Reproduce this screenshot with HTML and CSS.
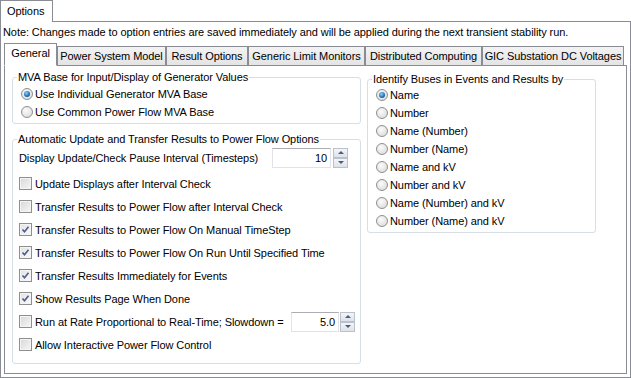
FILE: index.html
```html
<!DOCTYPE html>
<html lang="en">
<head>
    <meta charset="UTF-8">
    <meta name="viewport" content="width=device-width, initial-scale=1.0">
    <title>Options</title>
    <link rel="stylesheet" href="styles.css">
</head>
<body>
<div class="window">
    <!-- outer tab -->
    <div class="tab-strip outer-strip">
        <div class="tab active">Options</div>
        <div class="tab-fill"></div>
    </div>
    <div class="page outer-page">
        <p class="note">Note: Changes made to option entries are saved immediately and will be applied during the next transient stability run.</p>

        <!-- inner tabs -->
        <div class="tab-strip inner-strip">
            <div class="tab active t-general">General</div>
            <div class="tab t-power">Power System Model</div>
            <div class="tab t-result">Result Options</div>
            <div class="tab t-limit">Generic Limit Monitors</div>
            <div class="tab t-dist">Distributed Computing</div>
            <div class="tab t-gic">GIC Substation DC Voltages</div>
            <div class="tab-fill"></div>
        </div>
        <div class="page inner-page">
            <div class="col-left">
                <fieldset class="group group-mva">
                    <legend>MVA Base for Input/Display of Generator Values</legend>
                    <div class="opt"><span class="radio on"></span>Use Individual Generator MVA Base</div>
                    <div class="opt"><span class="radio"></span>Use Common Power Flow MVA Base</div>
                </fieldset>

                <fieldset class="group group-auto">
                    <legend>Automatic Update and Transfer Results to Power Flow Options</legend>
                    <div class="row spin-row">
                        <span class="label">Display Update/Check Pause Interval (Timesteps)</span>
                        <div class="spin spin-interval">
                            <div class="spin-box">10</div>
                            <div class="spin-btns">
                                <span class="spin-btn up"></span>
                                <span class="spin-btn down"></span>
                            </div>
                        </div>
                    </div>
                    <div class="row"><span class="check"></span>Update Displays after Interval Check</div>
                    <div class="row"><span class="check"></span>Transfer Results to Power Flow after Interval Check</div>
                    <div class="row"><span class="check on"><svg width="11" height="11" viewBox="0 0 11 11"><path d="M2.5 5.5 L4.5 7.8 L8.5 2.8" fill="none" stroke="#4b5d8c" stroke-width="1.6"/></svg></span>Transfer Results to Power Flow On Manual TimeStep</div>
                    <div class="row"><span class="check on"><svg width="11" height="11" viewBox="0 0 11 11"><path d="M2.5 5.5 L4.5 7.8 L8.5 2.8" fill="none" stroke="#4b5d8c" stroke-width="1.6"/></svg></span>Transfer Results to Power Flow On Run Until Specified Time</div>
                    <div class="row"><span class="check on"><svg width="11" height="11" viewBox="0 0 11 11"><path d="M2.5 5.5 L4.5 7.8 L8.5 2.8" fill="none" stroke="#4b5d8c" stroke-width="1.6"/></svg></span>Transfer Results Immediately for Events</div>
                    <div class="row"><span class="check on"><svg width="11" height="11" viewBox="0 0 11 11"><path d="M2.5 5.5 L4.5 7.8 L8.5 2.8" fill="none" stroke="#4b5d8c" stroke-width="1.6"/></svg></span>Show Results Page When Done</div>
                    <div class="row">
                        <span class="check"></span>Run at Rate Proportional to Real-Time; Slowdown =
                        <div class="spin spin-slow">
                            <div class="spin-box">5.0</div>
                            <div class="spin-btns">
                                <span class="spin-btn up"></span>
                                <span class="spin-btn down"></span>
                            </div>
                        </div>
                    </div>
                    <div class="row"><span class="check"></span>Allow Interactive Power Flow Control</div>
                </fieldset>
            </div>

            <div class="col-right">
                <fieldset class="group group-bus">
                    <legend>Identify Buses in Events and Results by</legend>
                    <div class="opt"><span class="radio on"></span>Name</div>
                    <div class="opt"><span class="radio"></span>Number</div>
                    <div class="opt"><span class="radio"></span>Name (Number)</div>
                    <div class="opt"><span class="radio"></span>Number (Name)</div>
                    <div class="opt"><span class="radio"></span>Name and kV</div>
                    <div class="opt"><span class="radio"></span>Number and kV</div>
                    <div class="opt"><span class="radio"></span>Name (Number) and kV</div>
                    <div class="opt"><span class="radio"></span>Number (Name) and kV</div>
                </fieldset>
            </div>
        </div>
    </div>
</div>
</body>
</html>
```

FILE: styles.css
```css
* {
    box-sizing: border-box;
}

body {
    margin: 0;
    font-family: "Liberation Sans", Arial, sans-serif;
    font-size: 11px;
    letter-spacing: -0.08px;
    color: #000;
    background: #fff;
}

.window {
    width: 631px;
    height: 378px;
}

/* tabs */
.tab-strip {
    display: flex;
    align-items: flex-end;
}

.tab {
    border: 1px solid #898c95;
    line-height: 15px;
    white-space: nowrap;
    text-align: center;
    padding-top: 2px;
    background: linear-gradient(#f3f3f3, #e4e4e4);
}

.tab.active {
    background: #fff;
    border-bottom-color: #fff;
}

.tab-fill {
    flex: 1;
    border-bottom: 1px solid #898c95;
}

.outer-strip {
    height: 22px;
}

.outer-strip .tab {
    width: 53px;
    height: 22px;
    border-bottom: none;
    padding: 3px 0 0 6px;
    text-align: left;
}

.inner-strip {
    height: 23px;
    margin-top: 3px;
}

.inner-strip .tab {
    height: 20px;
}

.inner-strip .tab.active {
    height: 23px;
}

.t-general { width: 53px; }
.t-power { width: 109px; }
.t-result { width: 82px; }
.t-limit { width: 117px; }
.t-dist { width: 117px; }
.t-gic { width: 142px; }

/* pages */
.page {
    border: 1px solid #898c95;
    border-top: none;
}

.outer-page {
    height: 356px;
    padding: 3px;
    display: flex;
    flex-direction: column;
}

.note {
    margin: 0 0 0 -1px;
    line-height: 15px;
    white-space: nowrap;
}

.inner-page {
    flex: 1;
    display: flex;
    gap: 6px;
    padding-left: 7px;
}

.col-left {
    width: 349px;
}

.col-right {
    width: 229px;
}

/* group boxes */
.group {
    margin: 0;
    min-width: 0;
    border: 1px solid #d5dfe5;
    border-radius: 3px;
    padding: 0 0 2px 6px;
}

.group legend {
    padding: 0 1px;
    margin-left: -2px;
    line-height: 14px;
}

.group-mva {
    margin-top: 4px;
    padding-top: 1px;
}

.group-auto {
    margin-top: 8px;
    padding-bottom: 7px;
}

.group-bus {
    margin-top: 6px;
}

.opt {
    display: flex;
    align-items: center;
    height: 18px;
    padding-left: 2px;
    white-space: nowrap;
}

.row {
    display: flex;
    align-items: center;
    height: 23px;
    white-space: nowrap;
}

.spin-row {
    margin-bottom: 3px;
}

/* radio buttons */
.radio {
    width: 12px;
    height: 12px;
    border-radius: 50%;
    border: 1px solid #8e8f8f;
    background: radial-gradient(circle at 40% 35%, #fbfbfb, #d6d6d6);
    margin-right: 2px;
    display: flex;
    align-items: center;
    justify-content: center;
    flex: none;
}

.radio.on::after {
    content: "";
    width: 6px;
    height: 6px;
    border-radius: 50%;
    background: radial-gradient(circle at 40% 35%, #8fd3f7, #1b6cb3 60%, #0b3f78);
}

/* checkboxes */
.check {
    width: 13px;
    height: 13px;
    border: 1px solid #8e8f8f;
    background: linear-gradient(135deg, #d8d8d8, #f6f6f6);
    box-shadow: inset 0 0 0 1px #f4f4f4;
    margin-right: 3px;
    display: flex;
    align-items: center;
    justify-content: center;
    flex: none;
}

.check.on {
    background: linear-gradient(135deg, #e2e2e2, #fafafa);
}

/* spin controls */
.spin {
    display: flex;
    margin-left: auto;
}

.spin-interval {
    gap: 2px;
    margin-right: 12px;
}

.spin-slow {
    gap: 1px;
    margin-right: 5px;
}

.spin-box {
    height: 20px;
    border: 1px solid #e2e3ea;
    border-top-color: #abadb3;
    text-align: right;
    padding-right: 3px;
    line-height: 18px;
}

.spin-interval .spin-box {
    width: 59px;
}

.spin-slow .spin-box {
    width: 48px;
}

.spin-btns {
    width: 15px;
    height: 20px;
    display: flex;
    flex-direction: column;
}

.spin-btn {
    height: 10px;
    border: 1px solid #b9c1cc;
    background: linear-gradient(#f3f5f8, #dde3ea);
    display: flex;
    align-items: center;
    justify-content: center;
}

.spin-btn::after {
    content: "";
    border-left: 3px solid transparent;
    border-right: 3px solid transparent;
}

.spin-btn.up::after {
    border-bottom: 3px solid #4d5c7c;
}

.spin-btn.down::after {
    border-top: 3px solid #4d5c7c;
}
```
